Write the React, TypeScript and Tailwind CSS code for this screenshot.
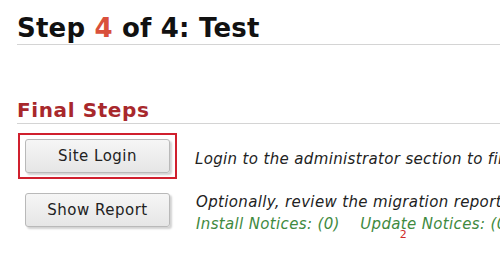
import React from "react";

const font = { fontFamily: '"DejaVu Sans", Verdana, sans-serif' };

function Btn({ label }: { label: string }) {
  return (
    <button
      className="w-[145px] h-[34px] rounded-[3px] border border-[#b9b9b9] bg-gradient-to-b from-[#f6f6f6] to-[#e6e6e6] text-[15px] tracking-[0.5px] text-[#222] shadow-[2px_2px_2px_rgba(0,0,0,0.18)]"
      style={font}
    >
      {label}
    </button>
  );
}

export default function App() {
  return (
    <div className="w-[500px] h-[259px] bg-white overflow-hidden text-[#222]" style={font}>
      <div className="pl-[17px] pt-[13px]">
        <h1 className="text-[26px] leading-[31px] font-bold text-[#111] border-b border-[#d4d4d4] whitespace-nowrap tracking-[0.2px]">
          Step <span className="text-[#d9503b]">4</span> of 4: Test
        </h1>
        <h2 className="mt-[52px] text-[20px] leading-[26px] font-bold text-[#a8282c] border-b border-[#d4d4d4] whitespace-nowrap tracking-[0.6px]">
          Final Steps
        </h2>
        <div className="mt-[9px] flex items-center">
          <div className="ml-[1px] w-[159px] h-[46px] shrink-0 border-2 border-[#d0202e] flex items-center pl-[5px]">
            <Btn label="Site Login" />
          </div>
          <div className="ml-[18px] mt-[6px] text-[15px] tracking-[0.35px] italic whitespace-nowrap text-[#222]">
            Login to the administrator section to finish
          </div>
        </div>
        <div className="mt-[14px] flex items-start">
          <div className="ml-[8px] shrink-0">
            <Btn label="Show Report" />
          </div>
          <div className="ml-[26px] -mt-[2px] text-[15px] leading-[22px] tracking-[0.35px] italic whitespace-nowrap">
            <div className="text-[#222]">Optionally, review the migration report</div>
            <div className="text-[#3f8a3f]">
              Install Notices: (0)&nbsp;&nbsp;&nbsp; Upda
              <span className="relative">
                t
                <span className="absolute left-[-1px] top-[14px] text-[11px] leading-[12px] not-italic text-[#d02a2a]">2</span>
              </span>
              e Notices: (0)
            </div>
          </div>
        </div>
      </div>
    </div>
  );
}
